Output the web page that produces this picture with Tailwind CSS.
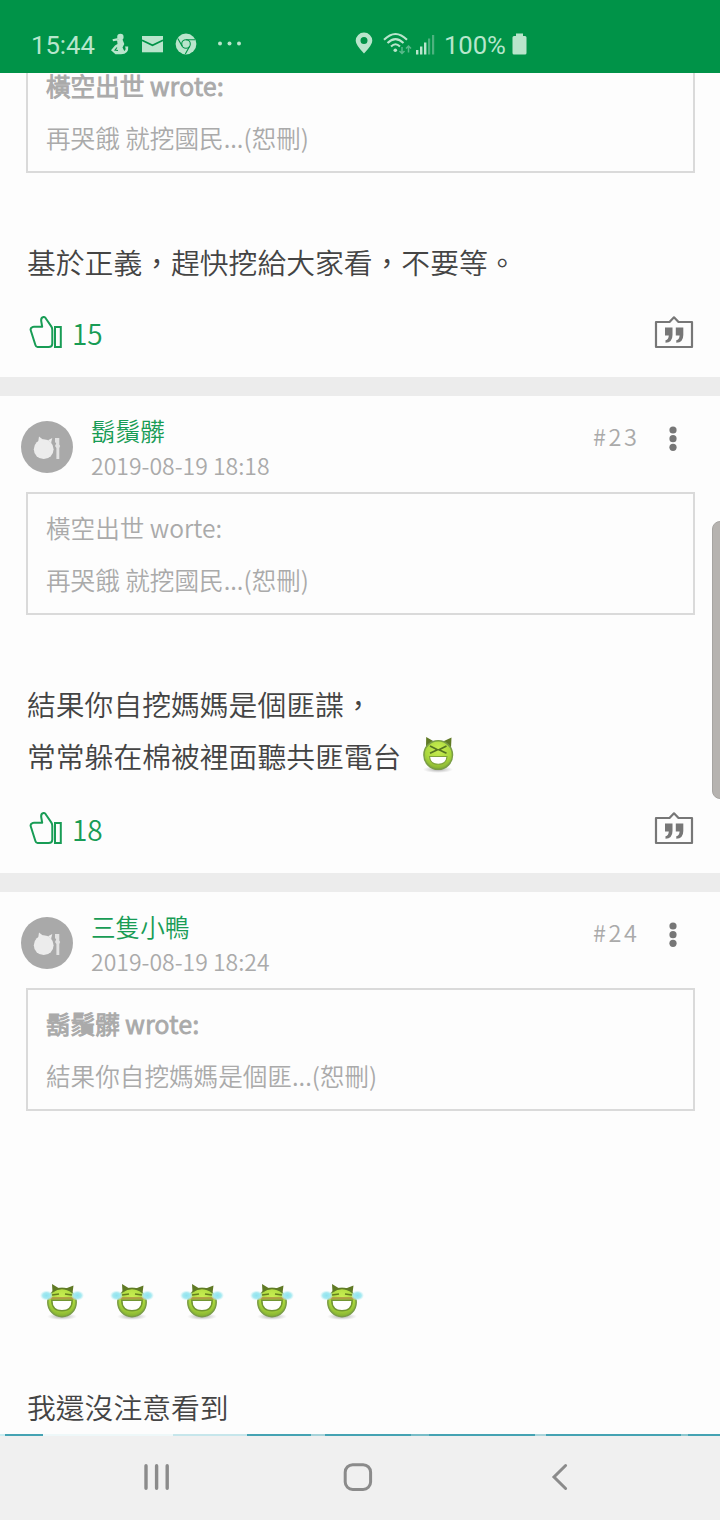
<!DOCTYPE html>
<html lang="zh-TW">
<head>
<meta charset="utf-8">
<title>Forum thread</title>
<script src="https://cdn.jsdelivr.net/npm/@tailwindcss/browser@4"></script>
</head>
<body class="bg-[#fdfdfd]">
<svg class="absolute h-0 w-0">
  <defs>
    <radialGradient id="skin" cx=".5" cy=".3" r=".75"><stop offset="0" stop-color="#c9ee52"/><stop offset=".6" stop-color="#aad83c"/><stop offset="1" stop-color="#7ba530"/></radialGradient>
    <radialGradient id="shade"><stop offset="0" stop-color="#777" stop-opacity=".65"/><stop offset="1" stop-color="#999" stop-opacity="0"/></radialGradient>
    <radialGradient id="tear"><stop offset="0" stop-color="#8de3ee"/><stop offset=".6" stop-color="#a5e9f1"/><stop offset="1" stop-color="#d8f6f8" stop-opacity=".3"/></radialGradient>
    <symbol id="thumb" viewBox="0 0 34 34">
      <g fill="none" stroke="#189c55" stroke-width="2" stroke-linejoin="round" stroke-linecap="round">
        <path d="M3.3 11.2 Q4 10.8 5 10.8 H13.2 L12.2 5 Q11.8 1.4 14.5 1 Q16.2 .8 17.2 3 L22.4 10.6 Q23.3 12 23.3 14 V27.5 Q23.3 31 19.5 31 H8.5 Q7 31 6.4 29 L1.8 14.5 Q1 12 3.3 11.2Z"/>
        <path d="M26 11 H31.8 V31 H26Z" stroke-linejoin="miter"/>
      </g>
    </symbol>
    <symbol id="quote" viewBox="0 0 40 36">
      <path d="M2 7 H15.5 L20 2.3 L24.5 7 H38 V32 H2Z" fill="none" stroke="#777" stroke-width="2.2" stroke-linejoin="round"/>
      <path d="M11 12.5 H18.5 V20 Q18.5 27.5 11.5 27.7 V25.3 Q14.6 24.7 14.8 20.5 H11Z M21.8 12.5 H29.3 V20 Q29.3 27.5 22.3 27.7 V25.3 Q25.4 24.7 25.6 20.5 H21.8Z" fill="#777"/>
    </symbol>
    <symbol id="avatar" viewBox="0 0 52 52">
      <circle cx="26" cy="26" r="26" fill="#a9a9a9"/>
      <circle cx="22.7" cy="28.2" r="9.9" fill="#ececec"/>
      <path d="M17.2 21 L18 15.6 L22.5 19Z M27 19.2 L31.3 17 L30 22Z" fill="#ececec"/>
      <path d="M34 17 H38.3 V23.5 L39.2 25 L38.3 27 V38 H35.4 V27 L34 25 L35.2 22.5 L34 21Z" fill="#e2e2e2"/>
    </symbol>
    <symbol id="laugh" viewBox="0 0 36 40">
      <ellipse cx="18" cy="34.5" rx="15" ry="3.5" fill="url(#shade)"/>
      <path d="M6 12 L6.2 2 L14 6.5 L23 6.5 L31.5 2.5 L31 13Z" fill="#607a25"/>
      <circle cx="18.2" cy="20" r="14.3" fill="url(#skin)" stroke="#7a9d46" stroke-width="1.5"/>
      <path d="M10 11 L17.5 14.8 L10 18.3 M26.5 11 L19 14.8 L26.5 18.3" fill="none" stroke="#557422" stroke-width="1.7"/>
      <path d="M9.5 21.5 H27 Q26.5 29.3 18.2 29.3 Q10 29.3 9.5 21.5Z" fill="#fff" stroke="#7fa33a" stroke-width="1.1"/>
    </symbol>
    <symbol id="joy" viewBox="0 0 44 40">
      <ellipse cx="22" cy="34.5" rx="15" ry="3.5" fill="url(#shade)"/>
      <circle cx="22" cy="20.5" r="14.2" fill="url(#skin)" stroke="#7a9d46" stroke-width="1.5"/>
      <path d="M12.5 10.5 L12 2 L18.5 6 L27 6 L33.5 3.5 L32.5 11 Q22 4 12.5 10.5Z" fill="#607a25"/>
      <path d="M9 16.3 H35" stroke="#ae9e43" stroke-width="2.4"/>
      <ellipse cx="6.5" cy="13.5" rx="6.3" ry="4.8" fill="url(#tear)"/><ellipse cx="37.5" cy="13.5" rx="6.3" ry="4.8" fill="url(#tear)"/>
      <path d="M12 13 L19 12 M32 13 L25 12" stroke="#66801e" stroke-width="1.5"/>
      <path d="M11.8 18.3 H32.2 Q32.2 28.8 22 28.8 Q11.8 28.8 11.8 18.3Z" fill="#fff" stroke="#729632" stroke-width="1.5"/>
    </symbol>
  </defs>
</svg>
<div class="relative flex h-[1520px] w-[720px] flex-col overflow-hidden bg-[#fdfdfd] font-['Noto_Sans_CJK_TC',sans-serif] font-[350]">
  <header class="flex h-[73px] shrink-0 items-center bg-[#009348] pl-[31px] pt-[16px] font-[Roboto,sans-serif] text-[25.7px] text-[#b6e6cc]">
    <span class="w-[78px] pt-px font-normal">15:44</span>
    <svg class="h-6 w-[22px]" viewBox="0 0 22 24" fill="#b9e5cc"><circle cx="11.4" cy="4" r="3.2"/><path d="M3.5 6.3 L9 5 L8.5 7.5 L4 8.3Z M8 6.5 H13.5 L15.3 11 L13.5 14.5 L15.3 18 Q17.5 16.5 16 13.5 H19.2 Q20 21 12 21.3 H6.5 L2 17.3 L6 12.5 L8.5 11Z"/><path d="M8 14.5 L6 17 L9 17.5" fill="none" stroke="#009348" stroke-width="1.1"/></svg>
    <svg class="-mt-[2px] ml-[10px] h-5 w-[23px]" viewBox="0 0 23 20"><path d="M1 2 H22 V18.3 H1Z" fill="#b9e5cc"/><path d="M1 6.3 L11.5 11.2 L22 6.3" fill="none" stroke="#009348" stroke-width="1.8"/></svg>
    <svg class="-mt-[2px] ml-[11px] h-[22px] w-[22px]" viewBox="0 0 22 22"><circle cx="11" cy="11" r="10.4" fill="#b9e5cc"/><g fill="none" stroke="#009348" stroke-width="1.1"><circle cx="11" cy="11" r="4.3"/><path d="M11 6.7 H20 M7.2 13.1 L2.8 5.5 M14.8 13.1 L10.3 21"/></g></svg>
    <svg class="-mt-px ml-[20px] h-2 w-[26px]" viewBox="0 0 26 8" fill="#b9e5cc"><circle cx="3" cy="3.4" r="2"/><circle cx="12.5" cy="3.4" r="2"/><circle cx="22" cy="3.4" r="2"/></svg>
    <svg class="-mt-[3px] ml-[112px] h-[22px] w-[18px]" viewBox="0 0 18 22"><path d="M9 .5 A8.3 8.3 0 0 1 17.3 8.8 Q17.3 13 9 21.5 Q.7 13 .7 8.8 A8.3 8.3 0 0 1 9 .5Z M9 5 A3.5 3.5 0 1 0 9 12 A3.5 3.5 0 1 0 9 5Z" fill="#b9e5cc" fill-rule="evenodd"/></svg>
    <svg class="-mt-[2px] ml-[10px] h-[24px] w-[29px]" viewBox="0 0 29 24" fill="none"><g stroke="#b9e5cc" stroke-width="2"><path d="M1 7.8 Q12.5 -4 24 7.8"/><path d="M4.5 11 Q12.5 3.2 20.5 11"/><path d="M8 14.5 Q12.5 10 17 14.5"/></g><circle cx="12.3" cy="18.3" r="1.8" fill="#b9e5cc"/><path d="M19 15 V21.5 M16.5 19 L19 21.5 L21.5 19 M25.5 20.5 V14 M23 16.5 L25.5 14 L28 16.5" stroke="#58b98a" stroke-width="1.5"/></svg>
    <svg class="-mt-[2px] ml-[3px] h-[22px] w-[20px]" viewBox="0 0 20 22"><path d="M1 17 H3.4 V21.5 H1Z M5 13.5 H7.4 V21.5 H5Z M9 9.5 H11.4 V21.5 H9Z" fill="#b9e5cc"/><path d="M13 5.5 H15.2 V21.5 H13Z M17 2 H19.2 V21.5 H17Z" fill="#4db27f"/></svg>
    <span class="ml-[9px] w-[67px] pt-px font-normal tracking-[-0.1px]">100%</span>
    <svg class="-mt-[2px] ml-px h-[22px] w-[15px]" viewBox="0 0 15 22"><path d="M4 .5 H11 V3 H13 Q14.5 3 14.5 4.5 V20 Q14.5 21.5 13 21.5 H2 Q.5 21.5 .5 20 V4.5 Q.5 3 2 3 H4Z" fill="#b9e5cc"/></svg>
  </header>

  <main class="flex h-[1361px] shrink-0 flex-col overflow-hidden">
    <article class="flex h-[304px] shrink-0 flex-col">
      <div class="mx-[26px] h-[100px] w-[669px] shrink-0 overflow-hidden border-x-2 border-b-2 border-[#dadada] pl-[18px] text-[24.6px] leading-[52px] text-[#aaa]">
        <p class="-mt-[14px] [-webkit-text-stroke:1px_#aaa]">橫空出世 <span class="tracking-[0.4px]">wrote:</span></p>
        <p>再哭餓 就挖國民...(恕刪)</p>
      </div>
      <p class="mt-[63px] pl-[27px] text-[28.8px] leading-[52px] text-[#444]">基於正義，趕快挖給大家看，不要等。</p>
      <div class="flex h-[90px] items-center pl-[29px] pr-[26px] pt-px text-[28px] text-[#189c55]">
        <svg class="h-[34px] w-[34px]"><use href="#thumb"/></svg><span class="ml-[9px]">15</span>
        <svg class="ml-auto h-[36px] w-[40px]"><use href="#quote"/></svg>
      </div>
    </article>
    <div class="h-[19px] shrink-0 bg-[#ececec]"></div>

    <article class="flex h-[477px] shrink-0 flex-col">
      <div class="flex h-[96px] shrink-0 pl-[21px] pt-[25px]">
        <svg class="h-[52px] w-[52px]"><use href="#avatar"/></svg>
        <div class="-mt-[8px] ml-[18px] w-[502px] text-[24.6px] leading-[35px]">
          <p class="text-[#189c55]">鬍鬚髒</p>
          <p class="text-[23px] text-[#aaa]">2019-08-19 18:18</p>
        </div>
        <span class="-mt-[1px] text-[23.5px] leading-[32px] tracking-[2.6px] text-[#aaa]">#23</span>
        <svg class="ml-auto mr-[42px] mt-[4px] h-[28px] w-[10px]" viewBox="0 0 10 28" fill="#777"><circle cx="5" cy="5" r="3.6"/><circle cx="5" cy="13.7" r="3.6"/><circle cx="5" cy="22.3" r="3.6"/></svg>
      </div>
      <div class="mx-[26px] h-[123px] w-[669px] shrink-0 border-2 border-[#dadada] pl-[18px] pt-[7px] text-[24.6px] leading-[52px] text-[#aaa]">
        <p>橫空出世 worte:</p>
        <p>再哭餓 就挖國民...(恕刪)</p>
      </div>
      <div class="mt-[63px] pl-[27px] text-[28.8px] leading-[52px] text-[#444]">
        <p>結果你自挖媽媽是個匪諜，</p>
        <p class="flex">常常躲在棉被裡面聽共匪電台<svg class="ml-[19px] mt-[5px] h-[40px] w-[36px]"><use href="#laugh"/></svg></p>
      </div>
      <div class="flex h-[95px] items-center pl-[29px] pr-[26px] pt-[2px] text-[28px] text-[#189c55]">
        <svg class="h-[34px] w-[34px]"><use href="#thumb"/></svg><span class="ml-[9px]">18</span>
        <svg class="ml-auto h-[36px] w-[40px]"><use href="#quote"/></svg>
      </div>
    </article>
    <div class="h-[19px] shrink-0 bg-[#ececec]"></div>

    <article class="flex h-[542px] shrink-0 flex-col">
      <div class="flex h-[96px] shrink-0 pl-[21px] pt-[25px]">
        <svg class="h-[52px] w-[52px]"><use href="#avatar"/></svg>
        <div class="-mt-[8px] ml-[18px] w-[502px] text-[24.6px] leading-[35px]">
          <p class="text-[#189c55]">三隻小鴨</p>
          <p class="text-[23px] text-[#aaa]">2019-08-19 18:24</p>
        </div>
        <span class="-mt-[1px] text-[23.5px] leading-[32px] tracking-[2.6px] text-[#aaa]">#24</span>
        <svg class="ml-auto mr-[42px] mt-[4px] h-[28px] w-[10px]" viewBox="0 0 10 28" fill="#777"><circle cx="5" cy="5" r="3.6"/><circle cx="5" cy="13.7" r="3.6"/><circle cx="5" cy="22.3" r="3.6"/></svg>
      </div>
      <div class="mx-[26px] h-[123px] w-[669px] shrink-0 border-2 border-[#dadada] pl-[18px] pt-[7px] text-[24.6px] leading-[52px] text-[#aaa]">
        <p class="[-webkit-text-stroke:1px_#aaa]">鬍鬚髒 <span class="tracking-[0.4px]">wrote:</span></p>
        <p>結果你自挖媽媽是個匪...(恕刪)</p>
      </div>
      <div class="mt-[171px] flex gap-[26px] pl-[40px]">
        <svg class="h-[40px] w-[44px]"><use href="#joy"/></svg>
        <svg class="h-[40px] w-[44px]"><use href="#joy"/></svg>
        <svg class="h-[40px] w-[44px]"><use href="#joy"/></svg>
        <svg class="h-[40px] w-[44px]"><use href="#joy"/></svg>
        <svg class="h-[40px] w-[44px]"><use href="#joy"/></svg>
      </div>
      <p class="mt-[59px] pl-[27px] text-[28.8px] leading-[52px] text-[#444]">我還沒注意看到</p>
    </article>
  </main>

  <div class="flex h-[2px] shrink-0 bg-[#45a3b3]">
    <i class="w-[5px] bg-[#c9eef2]"></i><i class="ml-[38px] w-[130px] bg-[#eef8f9]"></i><i class="w-[74px] bg-[#c6e6eb]"></i>
    <i class="ml-[64px] w-[14px] bg-[#a5d3da]"></i><i class="ml-[86px] w-[18px] bg-[#78bdc8]"></i><i class="ml-[106px] w-[11px] bg-[#a9d5db]"></i><i class="ml-[135px] w-[7px] bg-[#8cc8d0]"></i>
  </div>
  <nav class="flex h-[84px] shrink-0 bg-[#f0f0f0] pl-[142px] pt-[26px]">
    <svg class="h-[30px] w-[30px]" viewBox="0 0 30 30"><path d="M4 3.7 V26.3 M14.6 3.7 V26.3 M25.2 3.7 V26.3" stroke="#8b8b8b" stroke-width="3.4" stroke-linecap="round"/></svg>
    <svg class="ml-[171px] h-[30px] w-[30px]" viewBox="0 0 30 30"><rect x="2.2" y="2.7" width="25.4" height="24.8" rx="7.5" fill="none" stroke="#8b8b8b" stroke-width="3"/></svg>
    <svg class="ml-[176px] h-[30px] w-[24px]" viewBox="0 0 24 30"><path d="M16.6 3.5 L5 15 L16.6 26.5" fill="none" stroke="#8b8b8b" stroke-width="3" stroke-linecap="round"/></svg>
  </nav>
  <div class="absolute left-[712px] top-[521px] h-[278px] w-[16px] rounded-[8px] border border-[#a6a4a1] bg-[#b6b3b0]"></div>
</div>
</body>
</html>
